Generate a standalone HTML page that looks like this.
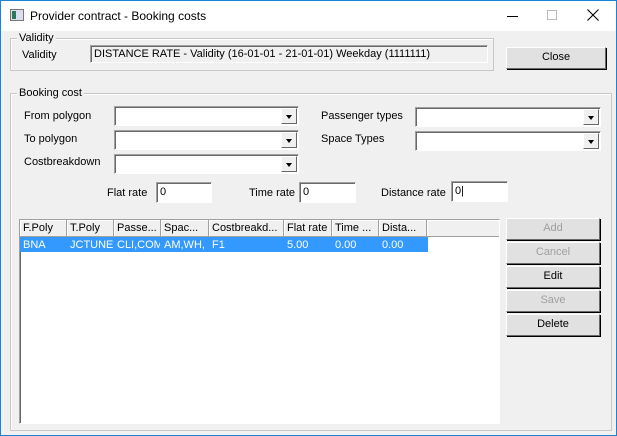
<!DOCTYPE html>
<html><head><meta charset="utf-8"><style>
*{box-sizing:border-box;margin:0;padding:0}
body{width:617px;height:436px;overflow:hidden;font-family:"Liberation Sans",sans-serif;font-size:11px;color:#000;background:#fff}
.win{position:absolute;left:0;top:0;width:617px;height:436px;border:1px solid #1883d7;background:#f0f0f0}
.title{position:absolute;left:0;top:0;width:615px;height:30px;background:#fff}
.a{position:absolute;white-space:nowrap}
.grp{position:absolute;border:1px solid #c8c8c8;box-shadow:inset 1px 1px 0 #fff}
.gl{position:absolute;background:#f0f0f0;padding:0 2px;top:-7px;left:6px}
.fld{position:absolute;background:#fff;border:1px solid;border-color:#a0a0a0 #fff #fff #a0a0a0;box-shadow:inset 1px 1px 0 #696969}
.dd{position:absolute;right:1px;top:1px;bottom:1px;width:16px;background:#f0f0f0;border:1px solid;border-color:#fff #696969 #696969 #fff}
.dd:after{content:"";position:absolute;left:4px;top:6px;border-left:3.5px solid transparent;border-right:3.5px solid transparent;border-top:4px solid #000}
.btn{position:absolute;background:#e1e1e1;border:1px solid;border-color:#fff #696969 #696969 #fff;box-shadow:1px 1px 0 #000;text-align:center;line-height:19px}
.dis{color:#a0a0a0}
.hd{position:absolute;top:0;height:17px;border-right:1px solid #a0a0a0;border-bottom:1px solid #a0a0a0;background:#f0f0f0;padding:2px 3px;box-shadow:inset 1px 1px 0 #fff;overflow:hidden}
.cell{position:absolute;top:18px;height:14px;color:#fff;padding:1px 3px;overflow:hidden}
</style></head><body><div class="win">
<div class="title">
<div class="a" style="left:9px;top:8px;width:14px;height:12px;border:1px solid #777;background:#dde"><div style="position:absolute;left:1px;top:1px;width:4px;height:8px;background:#2a7a5a"></div></div>
<div class="a" style="left:29px;top:8px;font-size:12px">Provider contract - Booking costs</div>
<div class="a" style="left:506px;top:15px;width:11px;height:1px;background:#000"></div>
<div class="a" style="left:546px;top:9px;width:10px;height:10px;border:1px solid #bbb"></div>
<svg class="a" style="left:586px;top:8px" width="12" height="12"><path d="M0.5 0.5L11.5 11.5M11.5 0.5L0.5 11.5" stroke="#000" stroke-width="1.1"/></svg>
</div>

<div class="grp" style="left:9px;top:37px;width:484px;height:33px"><span class="gl">Validity</span></div>
<div class="a" style="left:21px;top:48px">Validity</div>
<div class="fld" style="left:89px;top:44px;width:398px;height:18px;background:#f0f0f0;padding:2px 3px">DISTANCE RATE - Validity (16-01-01 - 21-01-01) Weekday (1111111)</div>
<div class="btn" style="left:505px;top:46px;width:100px;height:22px">Close</div>

<div class="grp" style="left:9px;top:92px;width:602px;height:338px"><span class="gl">Booking cost</span></div>
<div class="a" style="left:23px;top:109px">From polygon</div>
<div class="a" style="left:23px;top:132px">To polygon</div>
<div class="a" style="left:23px;top:155px">Costbreakdown</div>
<div class="fld" style="left:113px;top:105px;width:185px;height:20px"><div class="dd"></div></div>
<div class="fld" style="left:113px;top:129px;width:185px;height:20px"><div class="dd"></div></div>
<div class="fld" style="left:113px;top:153px;width:185px;height:20px"><div class="dd"></div></div>
<div class="a" style="left:320px;top:109px">Passenger types</div>
<div class="a" style="left:320px;top:132px">Space Types</div>
<div class="fld" style="left:414px;top:106px;width:186px;height:20px"><div class="dd"></div></div>
<div class="fld" style="left:414px;top:130px;width:186px;height:20px"><div class="dd"></div></div>

<div class="a" style="left:106px;top:186px">Flat rate</div>
<div class="fld" style="left:155px;top:181px;width:56px;height:21px;padding:3px 3px">0</div>
<div class="a" style="left:248px;top:186px">Time rate</div>
<div class="fld" style="left:298px;top:181px;width:57px;height:21px;padding:3px 3px">0</div>
<div class="a" style="left:380px;top:186px">Distance rate</div>
<div class="fld" style="left:450px;top:180px;width:57px;height:21px;padding:3px 3px">0|</div>

<div class="fld" style="left:18px;top:218px;width:481px;height:205px;overflow:hidden">
<div class="hd" style="left:0;width:47px">F.Poly</div>
<div class="hd" style="left:47px;width:47px">T.Poly</div>
<div class="hd" style="left:94px;width:47px">Passe...</div>
<div class="hd" style="left:141px;width:48px">Spac...</div>
<div class="hd" style="left:189px;width:75px">Costbreakd...</div>
<div class="hd" style="left:264px;width:48px">Flat rate</div>
<div class="hd" style="left:312px;width:47px">Time ...</div>
<div class="hd" style="left:359px;width:48px">Dista...</div>
<div class="hd" style="left:407px;width:80px;border-right:none"></div>
<div class="a" style="left:0;top:17px;width:408px;height:15px;background:#3399ff"></div>
<div class="cell" style="left:0;width:47px">BNA</div>
<div class="cell" style="left:47px;width:47px">JCTUNE</div>
<div class="cell" style="left:94px;width:46px">CLI,COM</div>
<div class="cell" style="left:141px;width:47px">AM,WH,</div>
<div class="cell" style="left:189px;width:75px">F1</div>
<div class="cell" style="left:264px;width:48px">5.00</div>
<div class="cell" style="left:312px;width:47px">0.00</div>
<div class="cell" style="left:359px;width:48px">0.00</div>
</div>

<div class="btn dis" style="left:505px;top:217px;width:94px;height:22px">Add</div>
<div class="btn dis" style="left:505px;top:241px;width:94px;height:22px">Cancel</div>
<div class="btn" style="left:505px;top:265px;width:94px;height:22px">Edit</div>
<div class="btn dis" style="left:505px;top:289px;width:94px;height:22px">Save</div>
<div class="btn" style="left:505px;top:313px;width:94px;height:22px">Delete</div>
</div></body></html>
